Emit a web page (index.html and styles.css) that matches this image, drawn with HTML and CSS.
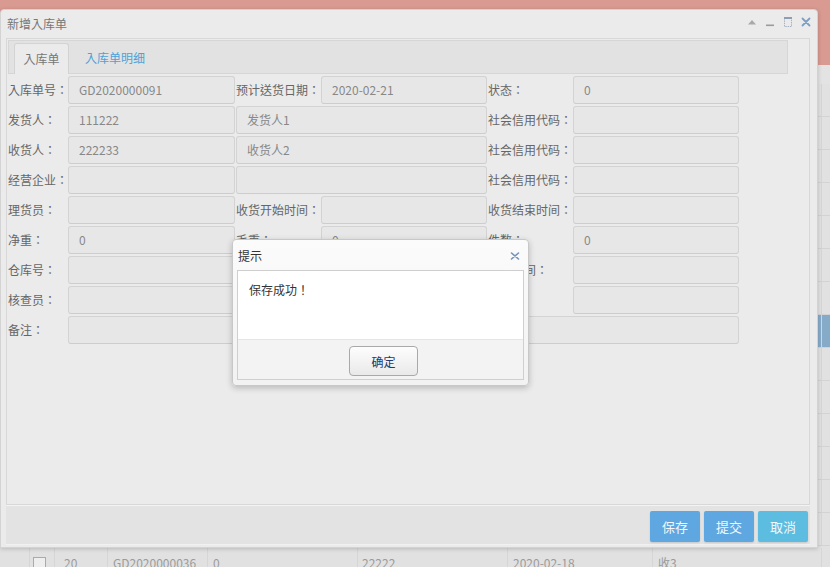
FILE: index.html
```html
<!DOCTYPE html>
<html>
<head>
<meta charset="utf-8">
<title>新增入库单</title>
<link rel="stylesheet" href="styles.css">
</head>
<body>
<div class="page">
  <div class="topbar"></div>
  <div class="toolbar"></div>
  <div class="rows">
    <div class="row"><span class="c c0"></span><span class="c c1"></span><span class="c c2"></span><span class="c c3"></span><span class="c c4"></span><span class="c c5"></span><span class="c c6"></span><span class="c c7"></span></div>
    <div class="row"><span class="c c0"></span><span class="c c1"></span><span class="c c2"></span><span class="c c3"></span><span class="c c4"></span><span class="c c5"></span><span class="c c6"></span><span class="c c7"></span></div>
    <div class="row"><span class="c c0"></span><span class="c c1"></span><span class="c c2"></span><span class="c c3"></span><span class="c c4"></span><span class="c c5"></span><span class="c c6"></span><span class="c c7"></span></div>
    <div class="row"><span class="c c0"></span><span class="c c1"></span><span class="c c2"></span><span class="c c3"></span><span class="c c4"></span><span class="c c5"></span><span class="c c6"></span><span class="c c7"></span></div>
    <div class="row"><span class="c c0"></span><span class="c c1"></span><span class="c c2"></span><span class="c c3"></span><span class="c c4"></span><span class="c c5"></span><span class="c c6"></span><span class="c c7"></span></div>
    <div class="row"><span class="c c0"></span><span class="c c1"></span><span class="c c2"></span><span class="c c3"></span><span class="c c4"></span><span class="c c5"></span><span class="c c6"></span><span class="c c7"></span></div>
    <div class="row"><span class="c c0"></span><span class="c c1"></span><span class="c c2"></span><span class="c c3"></span><span class="c c4"></span><span class="c c5"></span><span class="c c6"></span><span class="c c7"></span></div>
    <div class="row sel"><span class="c c0"></span><span class="c c1"></span><span class="c c2"></span><span class="c c3"></span><span class="c c4"></span><span class="c c5"></span><span class="c c6"></span><span class="c c7"></span></div>
    <div class="row"><span class="c c0"></span><span class="c c1"></span><span class="c c2"></span><span class="c c3"></span><span class="c c4"></span><span class="c c5"></span><span class="c c6"></span><span class="c c7"></span></div>
    <div class="row"><span class="c c0"></span><span class="c c1"></span><span class="c c2"></span><span class="c c3"></span><span class="c c4"></span><span class="c c5"></span><span class="c c6"></span><span class="c c7"></span></div>
    <div class="row"><span class="c c0"></span><span class="c c1"></span><span class="c c2"></span><span class="c c3"></span><span class="c c4"></span><span class="c c5"></span><span class="c c6"></span><span class="c c7"></span></div>
    <div class="row"><span class="c c0"></span><span class="c c1"></span><span class="c c2"></span><span class="c c3"></span><span class="c c4"></span><span class="c c5"></span><span class="c c6"></span><span class="c c7"></span></div>
    <div class="row"><span class="c c0"></span><span class="c c1"></span><span class="c c2"></span><span class="c c3"></span><span class="c c4"></span><span class="c c5"></span><span class="c c6"></span><span class="c c7"></span></div>
    <div class="row"><span class="c c0"></span><span class="c c1"></span><span class="c c2"></span><span class="c c3"></span><span class="c c4"></span><span class="c c5"></span><span class="c c6"></span><span class="c c7"></span></div>
    <div class="row last"><span class="c c0"></span><span class="c c1"><i class="chk"></i></span><span class="c c2">20</span><span class="c c3">GD2020000036</span><span class="c c4">0</span><span class="c c5">22222</span><span class="c c6">2020-02-18</span><span class="c c7">收3</span></div>
  </div>
</div>

<div class="win">
  <div class="win-title">
    <span class="win-name">新增入库单</span>
    <div class="win-tools">
      <svg class="tool" width="16" height="16" viewBox="0 0 16 16"><path d="M4 9.5 L12 9.5 L8 5 Z" fill="#a9a9a9"/></svg>
      <svg class="tool" width="16" height="16" viewBox="0 0 16 16"><rect x="4" y="9.5" width="8" height="1.6" fill="#9c9c9c"/></svg>
      <svg class="tool" width="16" height="16" viewBox="0 0 16 16"><rect x="4.5" y="2.5" width="7" height="9" fill="none" stroke="#a7b3c2" stroke-width="1" stroke-dasharray="1.5 0.8"/><rect x="4" y="2" width="8" height="2" fill="#8d9db2"/></svg>
      <svg class="tool" width="16" height="16" viewBox="0 0 16 16"><path d="M4.5 3.5 L11.5 10.5 M11.5 3.5 L4.5 10.5" stroke="#7f9ec6" stroke-width="1.8" stroke-linecap="round"/></svg>
    </div>
  </div>
  <div class="win-body">
    <div class="tabs">
      <div class="tab active">入库单</div>
      <div class="tab">入库单明细</div>
    </div>
    <div class="form">
      <span class="lbl">入库单号：</span><div class="inp">GD2020000091</div>
      <span class="lbl">预计送货日期：</span><div class="inp">2020-02-21</div>
      <span class="lbl">状态：</span><div class="inp">0</div>

      <span class="lbl">发货人：</span><div class="inp">111222</div>
      <div class="inp span2">发货人1</div>
      <span class="lbl">社会信用代码：</span><div class="inp"></div>

      <span class="lbl">收货人：</span><div class="inp">222233</div>
      <div class="inp span2">收货人2</div>
      <span class="lbl">社会信用代码：</span><div class="inp"></div>

      <span class="lbl">经营企业：</span><div class="inp"></div>
      <div class="inp span2"></div>
      <span class="lbl">社会信用代码：</span><div class="inp"></div>

      <span class="lbl">理货员：</span><div class="inp"></div>
      <span class="lbl">收货开始时间：</span><div class="inp"></div>
      <span class="lbl">收货结束时间：</span><div class="inp"></div>

      <span class="lbl">净重：</span><div class="inp">0</div>
      <span class="lbl">毛重：</span><div class="inp">0</div>
      <span class="lbl">件数：</span><div class="inp">0</div>

      <span class="lbl">仓库号：</span><div class="inp"></div>
      <span class="lbl">库位：</span><div class="inp"></div>
      <span class="lbl">入库时间：</span><div class="inp"></div>

      <span class="lbl">核查员：</span><div class="inp"></div>
      <span class="lbl">司机：</span><div class="inp"></div>
      <span class="lbl">车号：</span><div class="inp"></div>

      <span class="lbl">备注：</span><div class="inp span5"></div>
    </div>
  </div>
  <div class="win-foot">
    <button class="btn">保存</button>
    <button class="btn">提交</button>
    <button class="btn cancel">取消</button>
  </div>
</div>

<div class="dlg">
  <div class="dlg-head">
    <span>提示</span>
    <svg class="dlg-close" width="10" height="10" viewBox="0 0 10 10"><path d="M1.5 2 L8.5 8 M8.5 2 L1.5 8" stroke="#7393ba" stroke-width="1.6" stroke-linecap="round"/></svg>
  </div>
  <div class="dlg-inner">
    <div class="dlg-body">保存成功！</div>
    <div class="dlg-foot"><button class="dlg-btn">确定</button></div>
  </div>
</div>
</body>
</html>
```
FILE: styles.css
```css
* { box-sizing: border-box; margin: 0; padding: 0; }
html, body { width: 830px; height: 567px; overflow: hidden; }
body {
  position: relative;
  background: #dfdfdf;
  font-family: "Noto Sans CJK TC", "Noto Sans CJK SC", "Noto Sans", sans-serif;
  font-size: 12px;
}

/* background page */
.page { display: flex; flex-direction: column; height: 100%; }
.topbar { height: 65px; background: #d99a91; flex: none; }
.toolbar { height: 19px; background: #e3e3e3; flex: none; }
.rows { flex: 1; }
.row {
  height: 33px;
  display: flex;
  align-items: center;
  background: #e1e1e1;
  border-bottom: 1px solid #d3d3d3;
  color: #9b9b9b;
  line-height: 32px;
}
.row.sel { background: #86abc8; }
.row.last { padding-top: 2px; }
.c { height: 100%; border-right: 1px solid #d6d6d6; white-space: nowrap; overflow: hidden; display: flex; align-items: center; }
.c0 { width: 30px; }
.c1 { width: 25px; padding-left: 3px; }
.c2 { width: 53px; padding-left: 9px; }
.c3 { width: 100px; padding-left: 5px; }
.c4 { width: 150px; padding-left: 5px; }
.c5 { width: 150px; padding-left: 4px; }
.c6 { width: 145px; padding-left: 5px; }
.c7 { width: 169px; padding-left: 5px; }
.chk { display: block; width: 13px; height: 13px; border: 1px solid #aaa; background: #eee; }

/* window */
.win {
  position: absolute;
  left: 0;
  top: 9px;
  width: 818px;
  height: 539px;
  background: #ebebeb;
  border: 1px solid #d3d3d3;
  border-radius: 4px 4px 0 0;
  box-shadow: 0 1px 4px rgba(0, 0, 0, 0.18);
  padding: 0 7px 2px 5px;
  display: flex;
  flex-direction: column;
}
.win-title {
  height: 28px;
  flex: none;
  display: flex;
  align-items: center;
  justify-content: space-between;
  padding-bottom: 2px;
  margin-right: -4px;
}
.win-name { color: #777; font-size: 12px; padding-left: 1px; }
.win-tools { display: flex; gap: 2px; }
.tool { display: block; }

.win-body {
  flex: 1;
  border: 1px solid #d8d8d8;
  background: #ebebeb;
  padding: 1px 0 0 1px;
  display: flex;
  flex-direction: column;
}
.tabs {
  width: 780px;
  height: 34px;
  flex: none;
  background: #e2e2e2;
  border: 1px solid #d6d6d6;
  display: flex;
  align-items: flex-end;
  padding-left: 5px;
}
.tab {
  height: 30px;
  line-height: 29px;
  padding: 0 10px;
  color: #4ca3d8;
  font-size: 12px;
  margin-left: 6px;
}
.tab.active {
  width: 55px;
  padding: 0;
  margin-left: 0;
  text-align: center;
  color: #777;
  background: #ebebeb;
  border: 1px solid #d3d3d3;
  border-bottom: none;
  border-radius: 3px 3px 0 0;
  margin-bottom: -1px;
  height: 31px;
}

.form {
  margin-top: 1px;
  display: grid;
  grid-template-columns: 60px 168px 85px 167px 85px 167px;
  grid-auto-rows: 30px;
  width: 732px;
}
.lbl {
  color: #666;
  line-height: 30px;
  white-space: nowrap;
  font-size: 12px;
}
.inp {
  height: 28px;
  margin: 1px 1px 1px 0;
  border: 1px solid #d3d3d3;
  border-bottom-color: #cdcdcd;
  border-radius: 3px;
  background: #e7e7e7;
  padding-left: 10px;
  line-height: 26px;
  color: #888;
  font-size: 12px;
  white-space: nowrap;
}
.span2 { grid-column: span 2; }
.span5 { grid-column: span 5; }

.win-foot {
  height: 40px;
  flex: none;
  background: #e3e3e3;
  border-top: 1px solid #f3f3f3;
  border-bottom: 1px solid #f1f1f1;
  display: flex;
  justify-content: flex-end;
  align-items: flex-start;
  gap: 4px;
  padding: 5px 2px 0 0;
}
.btn {
  width: 50px;
  height: 31px;
  border: none;
  border-radius: 2px;
  background: #5ea7e0;
  color: #f2f7fb;
  font-family: inherit;
  font-size: 13px;
  line-height: 31px;
  box-shadow: 0 1px 2px rgba(0, 0, 0, 0.12);
}
.btn.cancel { background: #5cbde0; }

/* message dialog */
.dlg {
  position: absolute;
  left: 232px;
  top: 239px;
  width: 297px;
  height: 147px;
  background: linear-gradient(#fbfbfb, #f2f2f2);
  border: 1px solid #c8c8c8;
  border-radius: 4px;
  box-shadow: 0 2px 6px rgba(0, 0, 0, 0.22);
  padding: 0 4px 5px 4px;
  display: flex;
  flex-direction: column;
}
.dlg-head {
  height: 30px;
  flex: none;
  display: flex;
  align-items: center;
  justify-content: space-between;
  color: #333;
  font-size: 12px;
  padding: 1px 4px 0 1px;
}
.dlg-close { display: block; }
.dlg-inner {
  flex: 1;
  border: 1px solid #cfcfcf;
  display: flex;
  flex-direction: column;
}
.dlg-body {
  height: 68px;
  background: #fff;
  padding: 10px 11px 0;
  line-height: 18px;
  color: #333;
  font-size: 12px;
}
.dlg-foot {
  flex: 1;
  background: #f3f3f3;
  border-top: 1px solid #e6e6e6;
  display: flex;
  justify-content: center;
  align-items: flex-start;
  padding: 6px 0 0 6px;
}
.dlg-btn {
  width: 69px;
  height: 30px;
  border: 1px solid #a9a9a9;
  border-radius: 4px;
  background: linear-gradient(#fdfdfd, #e9e9e9);
  color: #1e3b6c;
  font-family: inherit;
  font-size: 12px;
}
```
